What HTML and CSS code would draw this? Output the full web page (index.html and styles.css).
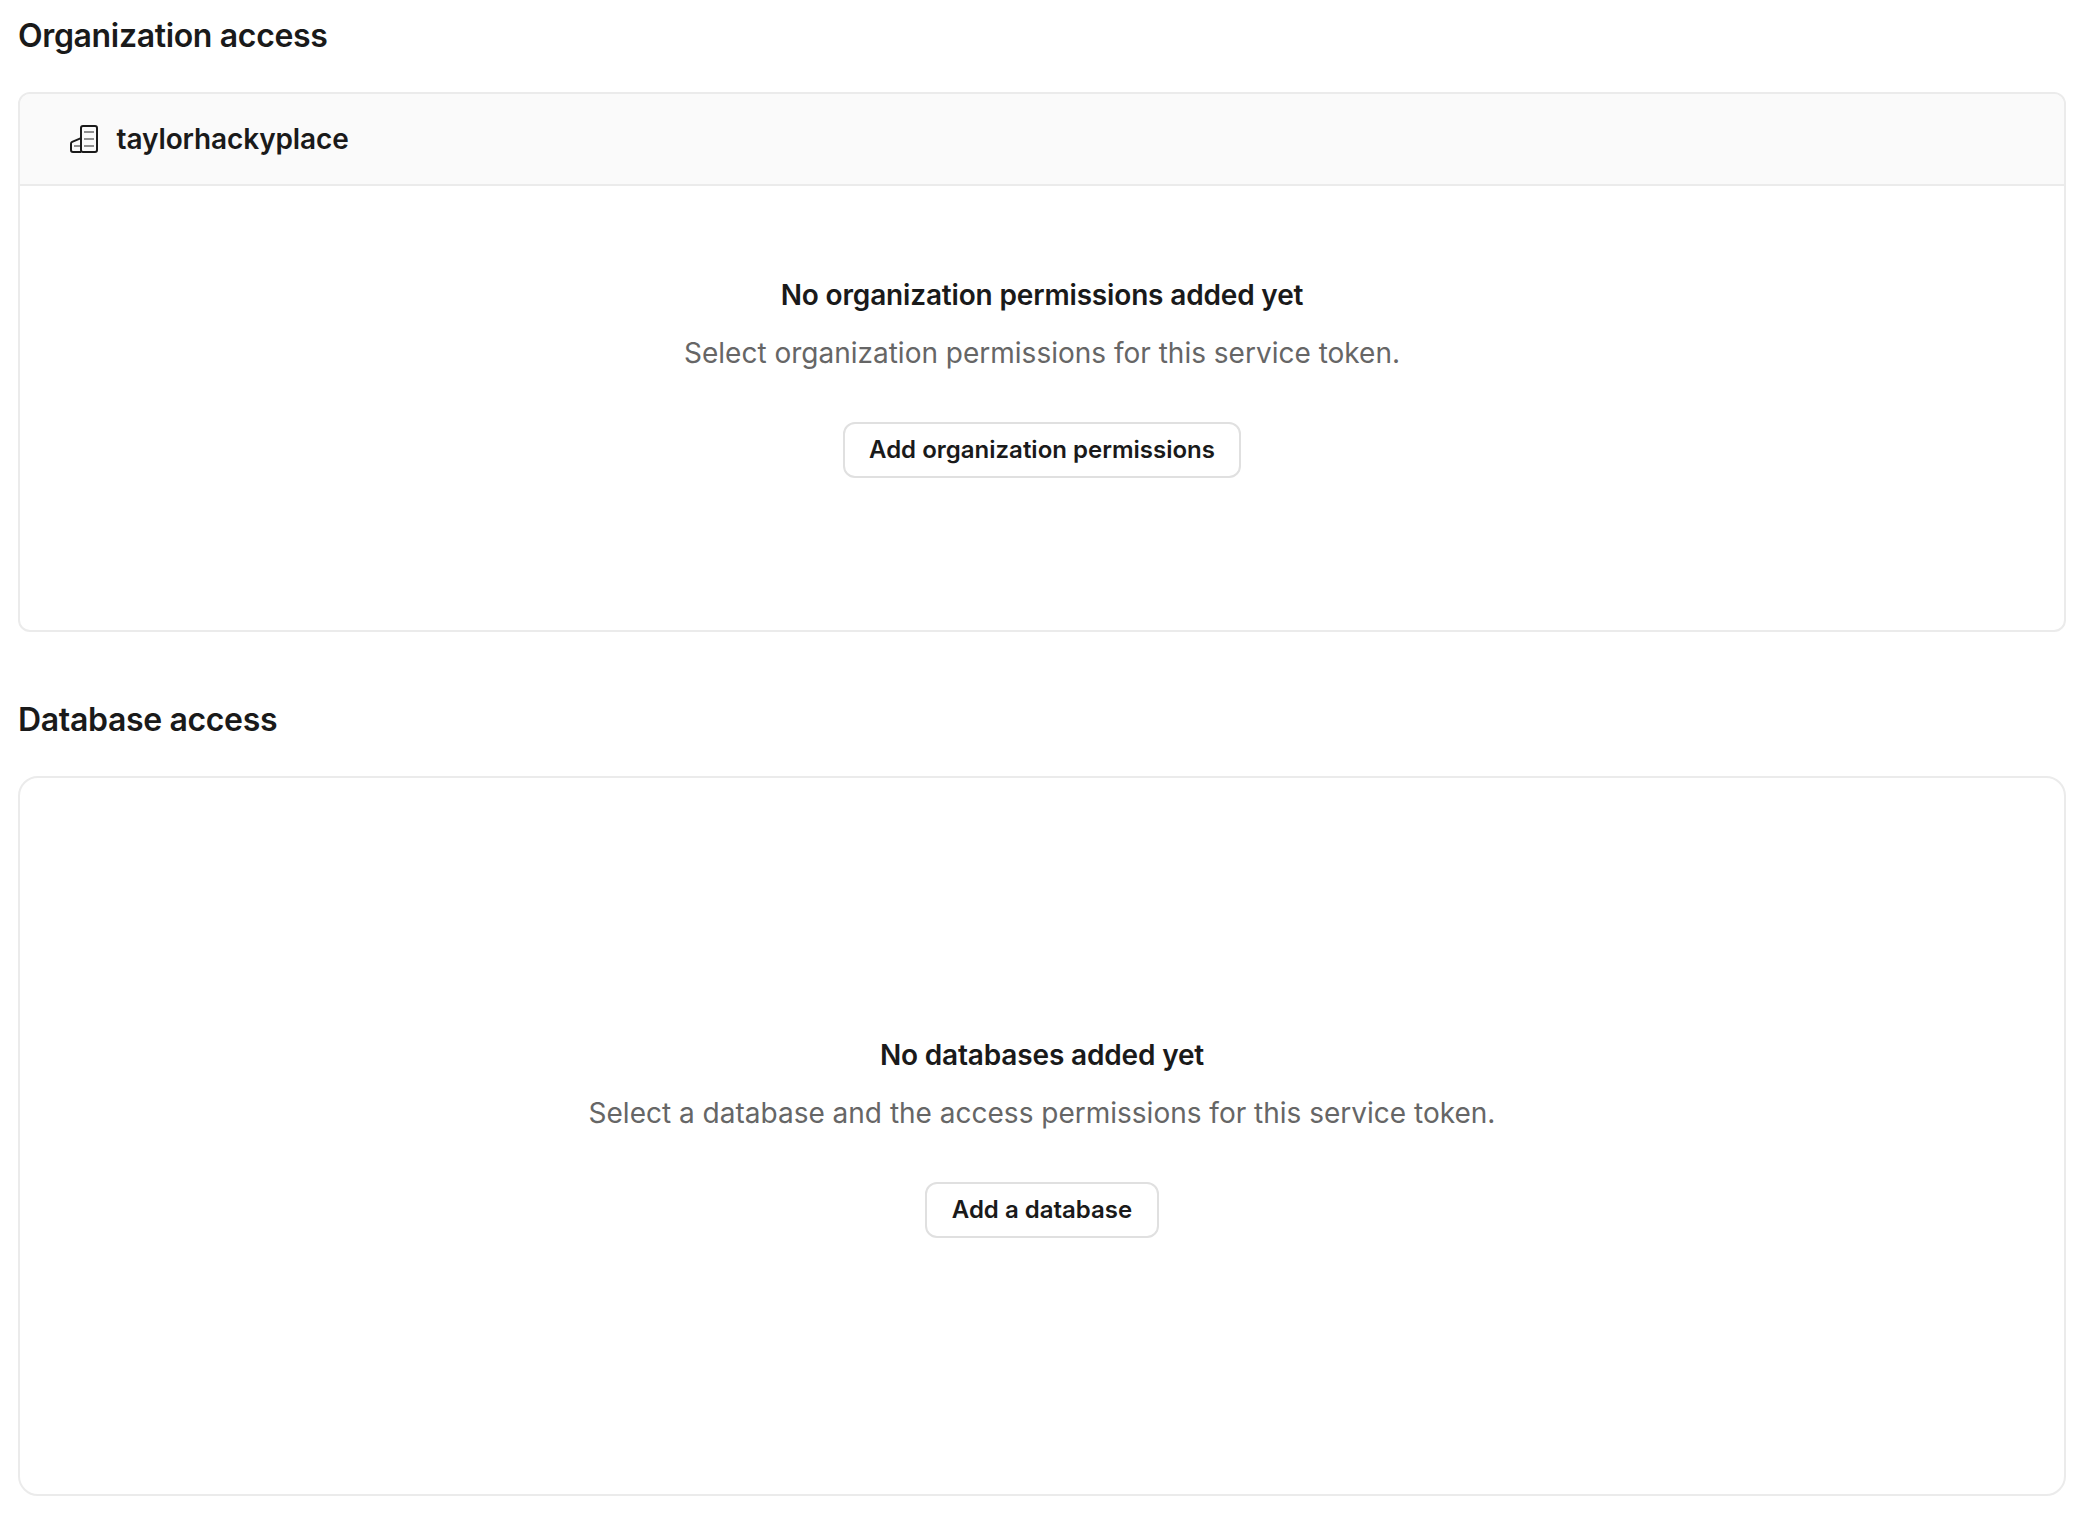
FILE: index.html
```
<!DOCTYPE html>
<html lang="en">
<head>
    <meta charset="UTF-8">
    <meta name="viewport" content="width=device-width, initial-scale=1.0">
    <title>Service token access</title>
    <link rel="stylesheet" href="styles.css">
</head>
<body>
    <section class="access-section">
        <h2>Organization access</h2>
        <div class="card">
            <div class="card-header">
                <svg class="org-icon" viewBox="0 0 28 28" fill="none" stroke="#1a1a1a" stroke-width="2">
                    <g stroke="#8f8f8f">
                        <path d="M14 7h10M14 14h10M14 21h10M4 21h6"/>
                    </g>
                    <rect x="11" y="1" width="16" height="26" rx="2"/>
                    <path d="M11 13.2L2.2 16.9Q1 17.4 1 18.7V25a2 2 0 0 0 2 2h8"/>
                </svg>
                <span class="org-name">taylorhackyplace</span>
            </div>
            <div class="empty-state">
                <h3>No organization permissions added yet</h3>
                <p>Select organization permissions for this service token.</p>
                <button type="button">Add organization permissions</button>
            </div>
        </div>
    </section>

    <section class="access-section">
        <h2>Database access</h2>
        <div class="card card-large">
            <div class="empty-state">
                <h3>No databases added yet</h3>
                <p>Select a database and the access permissions for this service token.</p>
                <button type="button">Add a database</button>
            </div>
        </div>
    </section>
</body>
</html>
```

FILE: styles.css
```
* {
    box-sizing: border-box;
}

body {
    font-family: Inter, "Liberation Sans", sans-serif;
    color: #1a1a1a;
    background: #fff;
    margin: 0;
    padding: 16px 14px 0 18px;
    -webkit-font-smoothing: antialiased;
}

h2, h3, p {
    margin: 0;
}

.access-section {
    margin-bottom: 68px;
}

.access-section:last-child {
    margin-bottom: 0;
}

h2 {
    font-size: 32px;
    line-height: 40px;
    font-weight: 600;
    letter-spacing: -0.34px;
    margin-bottom: 36px;
}

.card {
    height: 540px;
    border: 2px solid #ebebeb;
    border-radius: 12px;
    overflow: hidden;
}

.card-header {
    display: flex;
    align-items: center;
    gap: 18.6px;
    height: 92px;
    padding: 0 50px;
    background: #fafafa;
    border-bottom: 2px solid #ebebeb;
}

.org-icon {
    width: 28px;
    height: 28px;
}

.org-name {
    font-size: 28px;
    line-height: 42px;
    font-weight: 600;
    letter-spacing: -0.12px;
}

.empty-state {
    display: flex;
    flex-direction: column;
    align-items: center;
    padding-top: 88px;
}

h3 {
    font-size: 28px;
    line-height: 42px;
    font-weight: 600;
    letter-spacing: -0.16px;
    margin-bottom: 16px;
}

p {
    font-size: 28px;
    line-height: 42px;
    color: #666;
    margin-bottom: 48px;
}

button {
    height: 56px;
    padding: 0 24.5px 2px;
    font-family: inherit;
    font-size: 24px;
    font-weight: 600;
    color: #1a1a1a;
    background: #fff;
    border: 2px solid #e0e0e0;
    border-radius: 12px;
    cursor: pointer;
}

.card-large {
    height: 720px;
    border-radius: 20px;
}

.card-large .empty-state {
    padding-top: 256px;
}
```
